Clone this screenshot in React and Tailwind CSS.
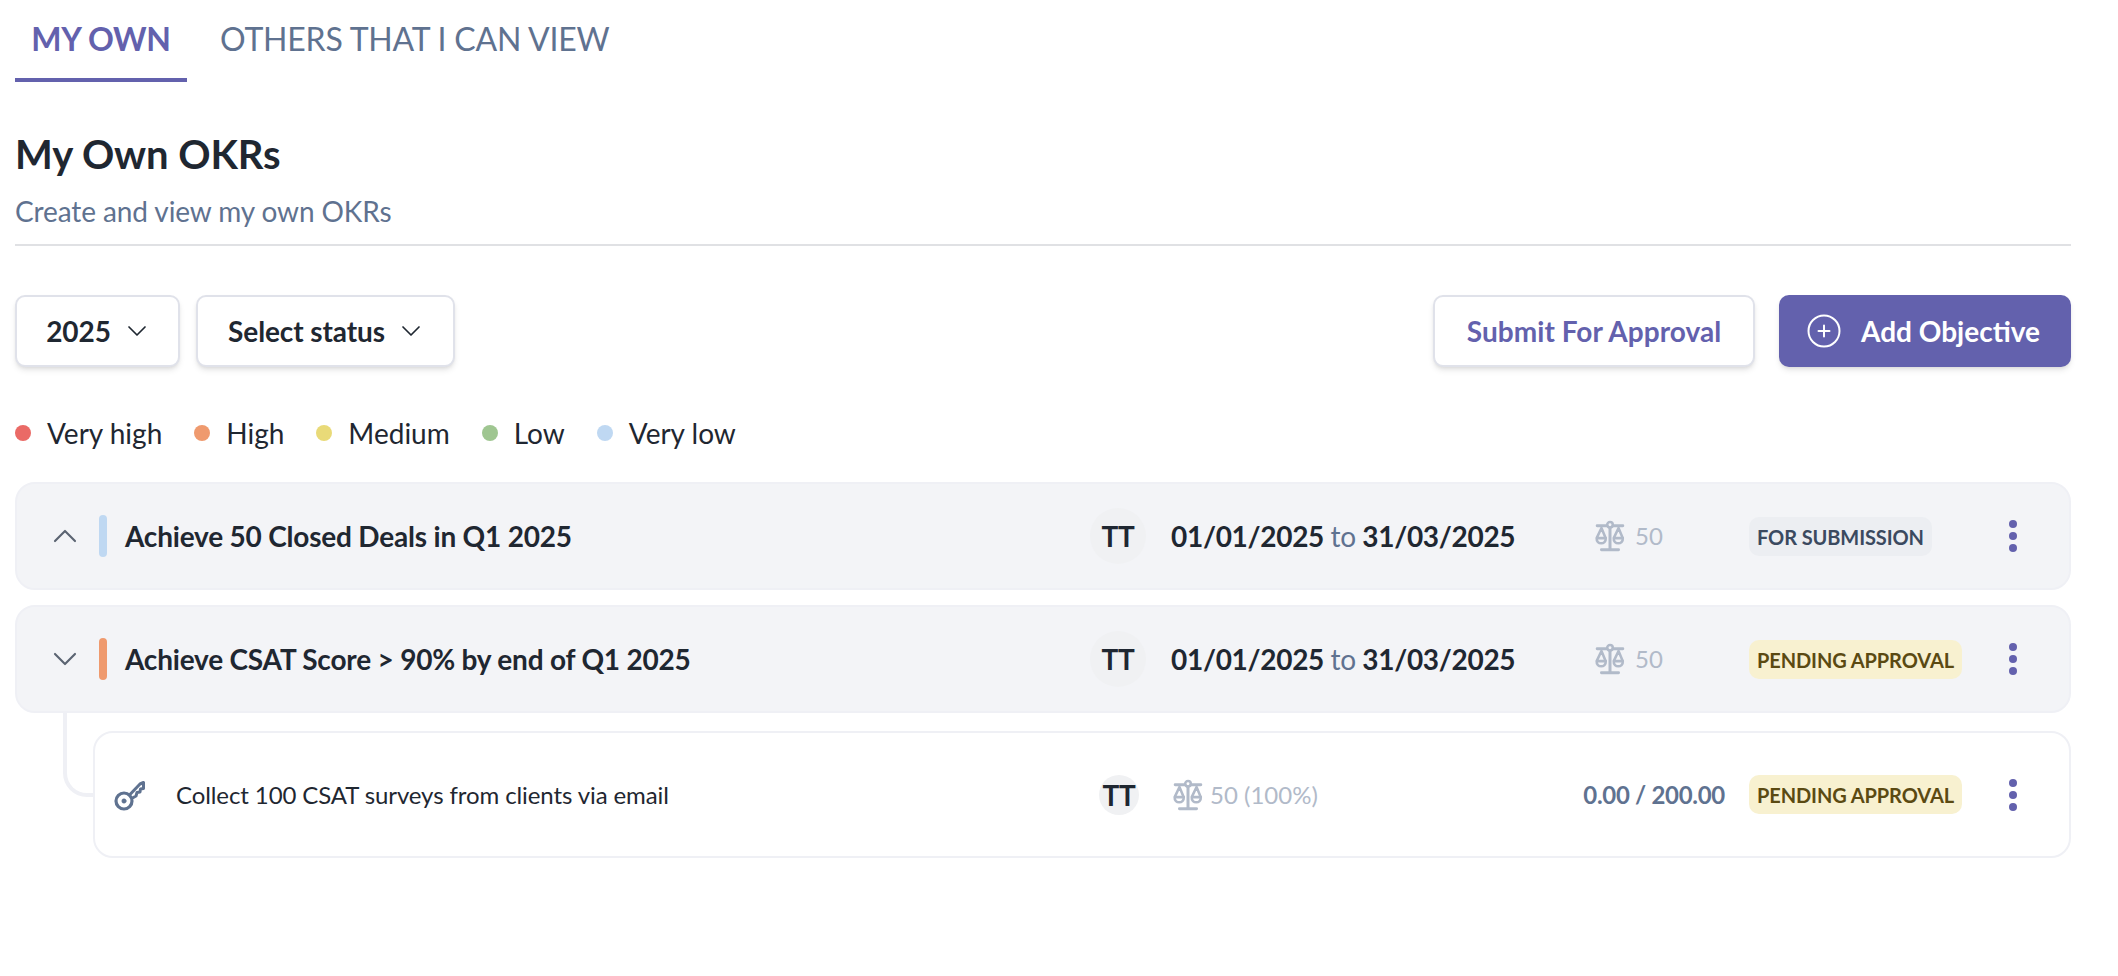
const Chevron = ({ up, cls = "" }) => (
  <svg viewBox="0 0 24 24" className={cls} fill="none" stroke="currentColor" strokeWidth="1.7" strokeLinecap="round" strokeLinejoin="round">
    <path d={up ? "M4 16 L12 8 L20 16" : "M4 8 L12 16 L20 8"} />
  </svg>
);
const Scale = () => (
  <svg viewBox="0 0 30 30" className="w-[32px] h-[32px] shrink-0" fill="none" stroke="#b1bac9" strokeWidth="2.4" strokeLinecap="round" strokeLinejoin="round">
    <circle cx="15" cy="4.5" r="2.6" />
    <path d="M3 5.5 H12 M18 5.5 H27 M15 7.5 V26.5 M7 28 H23" strokeWidth="2.8" />
    <path d="M7 7.5 L2.5 17 C2 23.5 11.5 23.5 11 17 Z M23 7.5 L18.5 17 C18 23.5 27.5 23.5 27 17 Z" />
    <path d="M3 17 H11 M19 17 H27" />
  </svg>
);
const Key = () => (
  <svg viewBox="0 0 32 32" className="w-[32px] h-[32px] shrink-0" fill="none" stroke="#5f7290" strokeLinejoin="round" strokeLinecap="round">
    <circle cx="10" cy="22" r="8" strokeWidth="3.2" />
    <circle cx="10" cy="22" r="2.2" fill="#5f7290" strokeWidth="0.6" />
    <path d="M15.5 16 L26 5 L29.5 3.5 L29.5 9.5 L26.5 10 L26 13 L23 13.5 L22 17 L18.5 19" strokeWidth="3" />
  </svg>
);
const Kebab = () => (
  <div className="flex flex-col gap-[4px] items-center w-[8px] shrink-0">
    <span className="w-[8px] h-[8px] rounded-full bg-[#6361ad]" />
    <span className="w-[8px] h-[8px] rounded-full bg-[#6361ad]" />
    <span className="w-[8px] h-[8px] rounded-full bg-[#6361ad]" />
  </div>
);
const Badge = ({ children, amber }) => (
  <span className={`h-[39px] flex items-center px-[8px] pt-[1px] rounded-[10px] text-[20px] font-bold tracking-[-0.1px] whitespace-nowrap ${amber ? "bg-[#f8f1d0] text-[#5b4a12]" : "bg-[#eceef2] text-[#3b4a60]"}`}>{children}</span>
);
const Legend = ({ color, label }) => (
  <div className="flex items-center gap-[16px]">
    <span className={`w-[16px] h-[16px] rounded-full ${color}`} />
    <span>{label}</span>
  </div>
);
const Objective = ({ up, bar, title, badge, amber }) => (
  <div className="h-[108px] rounded-[20px] bg-[#f3f4f7] border-2 border-[#eff0f5] flex items-center">
    <div className="w-[82px] pl-[33px] text-[#5b6472] shrink-0"><Chevron up={up} cls="w-[30px] h-[30px]" /></div>
    <span className={`w-[8px] h-[42px] rounded-full ${bar} shrink-0`} />
    <div className="w-[983px] pl-[18px] shrink-0 text-[28px] font-bold tracking-[-0.2px] text-[#1f2731] whitespace-nowrap">{title}</div>
    <div className="w-[56px] h-[56px] rounded-full bg-[#f0f1f3] flex items-center justify-center shrink-0 text-[28px] font-bold tracking-[-0.35px] text-[#1f2731]">TT</div>
    <div className="w-[448px] pl-[25px] shrink-0 text-[28px] font-bold tracking-[-0.3px] text-[#1f2731] whitespace-nowrap">01/01/2025 <span className="font-normal text-[#5f7290]">to</span> 31/03/2025</div>
    <div className="w-[155px] flex items-center gap-[9px] shrink-0 text-[24px] text-[#b1bac9]"><Scale />50</div>
    <div className="w-[260px] flex shrink-0"><Badge amber={amber}>{badge}</Badge></div>
    <Kebab />
  </div>
);
export default function App() {
  return (
    <div className="min-h-[976px] bg-white pl-[15px] pr-[47px] font-['Lato',sans-serif] text-[#1f2731]">
      <div className="flex h-[82px]">
        <div className="w-[172px] border-b-[4px] border-[#6361ad] flex justify-center pt-[17px] text-[32px] font-bold tracking-[-0.3px] leading-[44px] text-[#6361ad]">MY OWN</div>
        <div className="pl-[33px] pt-[17px] text-[32px] leading-[44px] tracking-[-0.2px] text-[#5f7290] whitespace-nowrap">OTHERS THAT I CAN VIEW</div>
      </div>
      <h1 className="mt-[48px] text-[40px] leading-[48px] font-bold tracking-[-0.1px] text-[#1f2731]">My Own OKRs</h1>
      <p className="mt-[15px] text-[28px] leading-[36px] tracking-[-0.1px] text-[#5f7290]">Create and view my own OKRs</p>
      <div className="mt-[15px] h-[2px] bg-[#e0e1e4]" />
      <div className="mt-[49px] flex items-center justify-between">
        <div className="flex gap-[16px]">
          <button className="h-[72px] w-[165px] rounded-[10px] border-2 border-[#e0e2ea] bg-white shadow-md flex items-center justify-center gap-[14px] text-[28px] font-bold tracking-[-0.1px] text-[#1f2731]">2025 <Chevron cls="w-[24px] h-[24px]" /></button>
          <button className="h-[72px] w-[259px] rounded-[10px] border-2 border-[#e0e2ea] bg-white shadow-md flex items-center justify-center gap-[14px] text-[28px] font-bold tracking-[-0.1px] text-[#1f2731]">Select status <Chevron cls="w-[24px] h-[24px]" /></button>
        </div>
        <div className="flex gap-[24px]">
          <button className="h-[72px] w-[322px] rounded-[10px] border-2 border-[#e0e2ea] bg-white shadow-md flex items-center justify-center text-[28px] font-bold tracking-[0.05px] text-[#6361ad]">Submit For Approval</button>
          <button className="h-[72px] w-[292px] pr-[3px] rounded-[10px] bg-[#6361ad] shadow-md flex items-center justify-center gap-[20px] text-[28px] font-bold text-white">
            <svg viewBox="0 0 34 34" className="w-[34px] h-[34px]" fill="none" stroke="white" strokeWidth="2" strokeLinecap="round"><circle cx="17" cy="17" r="15.5" /><path d="M17 11.5 V22.5 M11.5 17 H22.5" /></svg>
            Add Objective
          </button>
        </div>
      </div>
      <div className="mt-[48px] flex items-center gap-[32px] text-[28px] leading-[36px] text-[#1f2731]">
        <Legend color="bg-[#ea6a66]" label="Very high" />
        <Legend color="bg-[#ef9a6e]" label="High" />
        <Legend color="bg-[#e9da78]" label="Medium" />
        <Legend color="bg-[#9fc691]" label="Low" />
        <Legend color="bg-[#bfd8f2]" label="Very low" />
      </div>
      <div className="mt-[31px] flex flex-col gap-[15px]">
        <Objective up bar="bg-[#bfd8f2]" title="Achieve 50 Closed Deals in Q1 2025" badge="FOR SUBMISSION" />
        <div className="relative">
          <Objective bar="bg-[#ef9a6e]" title="Achieve CSAT Score > 90% by end of Q1 2025" badge="PENDING APPROVAL" amber />
          <div className="absolute left-[48px] top-[108px] w-[30px] h-[84px] border-l-[4px] border-b-[4px] border-[#eff0f5] rounded-bl-[24px]" />
          <div className="ml-[78px] mt-[18px] h-[127px] rounded-[20px] border-2 border-[#eff0f5] bg-white flex items-center">
            <div className="w-[81px] pl-[19px] shrink-0"><Key /></div>
            <div className="w-[923px] text-[24px] tracking-[-0.1px] text-[#1f2731] shrink-0 whitespace-nowrap">Collect 100 CSAT surveys from clients via email</div>
            <div className="w-[40px] h-[40px] rounded-full bg-[#f0f1f3] flex items-center justify-center shrink-0 text-[28px] font-bold tracking-[-0.35px] text-[#1f2731]">TT</div>
            <div className="flex-1 pl-[33px] flex items-center gap-[6px] text-[24px] text-[#b1bac9]"><Scale />50 (100%)</div>
            <div className="mr-[24px] text-[24px] font-bold tracking-[-0.3px] text-[#5f7290] whitespace-nowrap">0.00 / 200.00</div>
            <div className="w-[260px] flex shrink-0"><Badge amber>PENDING APPROVAL</Badge></div>
            <div className="pr-[52px]"><Kebab /></div>
          </div>
        </div>
      </div>
    </div>
  );
}
